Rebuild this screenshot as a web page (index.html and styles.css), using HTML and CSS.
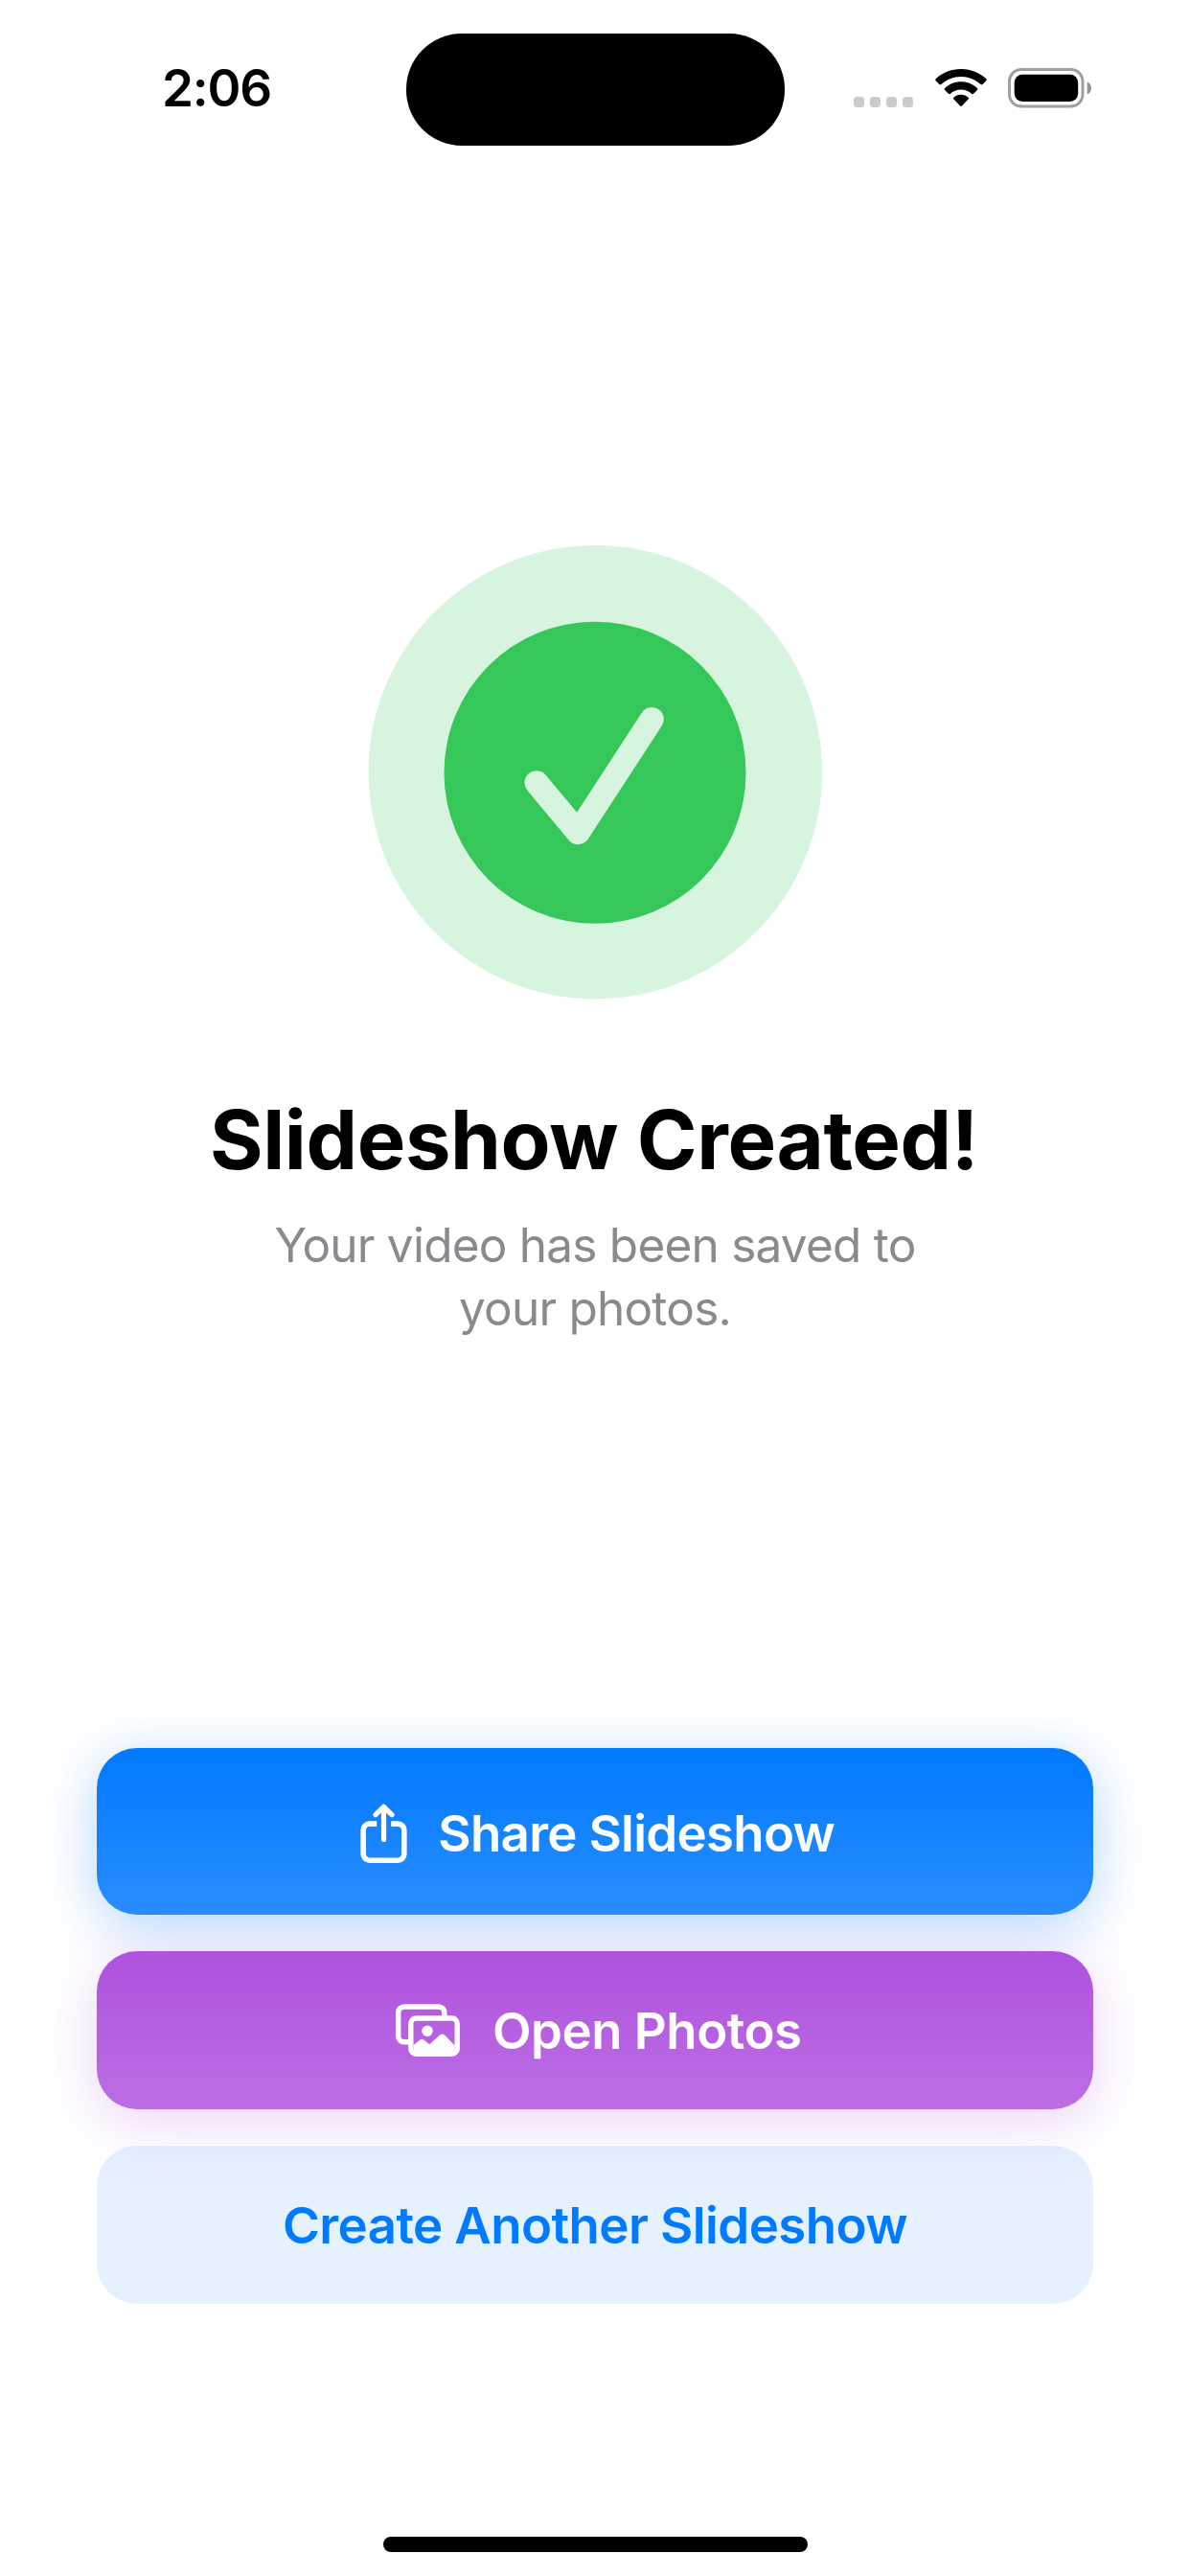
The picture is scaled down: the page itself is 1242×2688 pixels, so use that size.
FILE: index.html
```html
<!DOCTYPE html>
<html lang="en">
<head>
<meta charset="utf-8">
<title>Slideshow Created</title>
<link rel="stylesheet" href="styles.css">
</head>
<body>
<div class="screen">
  <header class="status-bar">
    <div class="time">2:06</div>
    <div class="island"></div>
    <div class="indicators">
      <div class="cellular"><i></i><i></i><i></i><i></i></div>
      <svg class="wifi" viewBox="0 0 54 40" aria-hidden="true">
        <path d="M27 0C37.3 0 46.700 3.900 53.300 10.300C53.900 10.900 53.900 11.700 53.300 12.300L49.600 16.100C49 16.700 48.200 16.700 47.600 16.100C42.200 11.100 35 8.100 27 8.100C19 8.100 11.800 11.100 6.400 16.100C5.800 16.700 5 16.700 4.400 16.100L0.700 12.300C0.100 11.700 0.100 10.900 0.700 10.300C7.300 3.900 16.700 0 27 0Z"/>
        <path d="M27 13.300C33.600 13.300 39.500 15.800 43.900 20C44.500 20.600 44.500 21.400 43.900 22L40.100 25.800C39.500 26.400 38.800 26.400 38.200 25.900C35.300 23.200 31.300 21.500 27 21.500C22.700 21.500 18.700 23.200 15.800 25.900C15.200 26.400 14.500 26.400 13.900 25.800L10.100 22C9.500 21.400 9.500 20.600 10.100 20C14.500 15.800 20.400 13.300 27 13.300Z"/>
        <path d="M27 26.800C30 26.800 32.600 27.900 34.600 29.700C35.200 30.300 35.200 30.900 34.600 31.500L27.900 38.600C27.400 39.200 26.600 39.200 26.100 38.600L19.400 31.500C18.800 30.900 18.800 30.300 19.400 29.700C21.400 27.900 24 26.800 27 26.800Z"/>
      </svg>
      <svg class="battery" viewBox="0 0 88 42" aria-hidden="true">
        <rect class="battery-shell" x="1.500" y="1.500" width="76.500" height="38.500" rx="12.500"/>
        <rect x="6.700" y="6.700" width="66.500" height="28.300" rx="8.500"/>
        <path class="battery-cap" d="M82.700 14.500C85.200 15.500 87 17.900 87 20.900C87 23.900 85.200 26.300 82.700 27.300Z"/>
      </svg>
    </div>
  </header>

  <main class="result">
    <svg class="success" viewBox="0 0 474 474" aria-hidden="true">
      <circle class="halo" cx="237.300" cy="236.700" r="236.700"/>
      <circle class="disc" cx="237" cy="237.300" r="157.500"/>
      <path class="check" d="M176 247.700L219.300 299.700L296.300 181.500"/>
    </svg>
    <h1 class="title">Slideshow Created!</h1>
    <p class="subtitle">Your video has been saved to<br>your photos.</p>
  </main>

  <nav class="actions">
    <button class="action share">
      <svg class="share-icon" viewBox="0 0 49 62" aria-hidden="true">
        <path d="M17.200 21.100H9.700A6.500 6.500 0 0 0 3.200 27.600V52.700A6.500 6.500 0 0 0 9.700 59.200H39.300A6.500 6.500 0 0 0 45.800 52.700V27.600A6.500 6.500 0 0 0 39.300 21.100H32.200"/>
        <path class="arrow" d="M24.500 37.500V4M16 11.600L24.500 3.300L33 11.600"/>
      </svg>
      <span class="label">Share Slideshow</span>
    </button>
    <button class="action photos">
      <svg class="photos-icon" viewBox="0 0 67 55" aria-hidden="true">
        <path class="frame" d="M14 39.800H8.700A6 6 0 0 1 2.700 33.800V9A6 6 0 0 1 8.700 3H44.800A6 6 0 0 1 50.800 9V13"/>
        <rect class="frame" x="15.800" y="15" width="48.400" height="37.200" rx="5.500"/>
        <circle cx="33" cy="28.300" r="5.700"/>
        <path d="M18.500 43L25.500 37.500Q27.300 36 29.100 37.500L35.300 42.300L46 32.500Q48.500 30.500 51 32.500L61.500 43.300V52H18.500Z"/>
      </svg>
      <span class="label">Open Photos</span>
    </button>
    <button class="action another"><span class="label">Create Another Slideshow</span></button>
  </nav>

  <div class="home-indicator"></div>
</div>
</body>
</html>
```
FILE: styles.css
```css
* {
  box-sizing: border-box;
}

body {
  margin: 0;
  background: #fff;
  font-family: Inter, "Liberation Sans", sans-serif;
}

.screen {
  display: flex;
  flex-direction: column;
  align-items: center;
  width: 1242px;
  height: 2688px;
  overflow: hidden;
  background: #fff;
}

.status-bar {
  display: grid;
  grid-template-columns: 423.5px 395.5px 1fr;
  width: 100%;
  height: 151.500px;
  padding-top: 35.300px;
}

.time {
  padding: 1px 0 0 169px;
  font-size: 53px;
  font-weight: 600;
  line-height: 112px;
  letter-spacing: -1.200px;
}

.island {
  background: #000;
  border-radius: 58px;
}

.indicators {
  display: flex;
  align-items: flex-start;
  padding: 36px 0 0 72px;
}

.cellular {
  display: flex;
  gap: 6px;
  padding-top: 29.500px;
}

.cellular i {
  width: 11px;
  height: 11px;
  border-radius: 3.500px;
  background: #cbcbcb;
}

.wifi {
  width: 54px;
  height: 40px;
  margin: 1px 0 0 23px;
}

.battery {
  width: 88px;
  height: 42px;
  margin-left: 22px;
}

.battery-shell {
  fill: none;
  stroke: #a0a0a0;
  stroke-width: 3;
}

.battery-cap {
  fill: #919191;
}

.result {
  display: flex;
  flex-direction: column;
  align-items: center;
  height: 1672px;
  padding-top: 417px;
}

.success {
  width: 474px;
  height: 474px;
}

.halo {
  fill: #d7f4de;
}

.disc {
  fill: #35c759;
}

.check {
  fill: none;
  stroke: #d7f4de;
  stroke-width: 25;
  stroke-linecap: round;
  stroke-linejoin: round;
}

.title {
  margin: 97px 0 0;
  padding-right: 2px;
  font-size: 85px;
  font-weight: 700;
  line-height: 100px;
  letter-spacing: -0.400px;
  white-space: nowrap;
}

.subtitle {
  margin: 26px 0 0;
  color: #8a8a8e;
  font-size: 49.500px;
  line-height: 66.300px;
  letter-spacing: -0.770px;
  text-align: center;
  white-space: nowrap;
}

.actions {
  display: flex;
  flex-direction: column;
  gap: 38px;
  width: 1040px;
}

.action {
  display: flex;
  align-items: center;
  justify-content: center;
  height: 165px;
  padding: 0;
  border: 0;
  border-radius: 42px;
  color: #fff;
  font-family: inherit;
  font-size: 52.800px;
  font-weight: 600;
  line-height: 64px;
  letter-spacing: -0.580px;
  white-space: nowrap;
}

.share {
  gap: 32.500px;
  height: 174.500px;
  padding: 5px 0 0 5px;
  background: linear-gradient(#007aff, #2a8dff);
  box-shadow: 0 12px 60px rgba(0, 122, 255, 0.3);
  letter-spacing: -0.700px;
}

.photos {
  gap: 33.500px;
  padding-left: 8px;
  background: linear-gradient(#af52de, #bc6ee4);
  box-shadow: 0 12px 60px rgba(175, 82, 222, 0.25);
  letter-spacing: -0.500px;
}

.another {
  background: rgba(0, 122, 255, 0.1);
  color: #007aff;
}

.share-icon {
  width: 49px;
  height: 62px;
  fill: none;
  stroke: #fff;
  stroke-width: 5.600;
}

.arrow {
  stroke-width: 5.200;
  stroke-linecap: round;
  stroke-linejoin: round;
}

.photos-icon {
  width: 67px;
  height: 55px;
  fill: #fff;
}

.frame {
  fill: none;
  stroke: #fff;
  stroke-width: 5.400;
}

.home-indicator {
  width: 443px;
  height: 16px;
  margin-top: 243px;
  border-radius: 8px;
  background: #000;
}
```
